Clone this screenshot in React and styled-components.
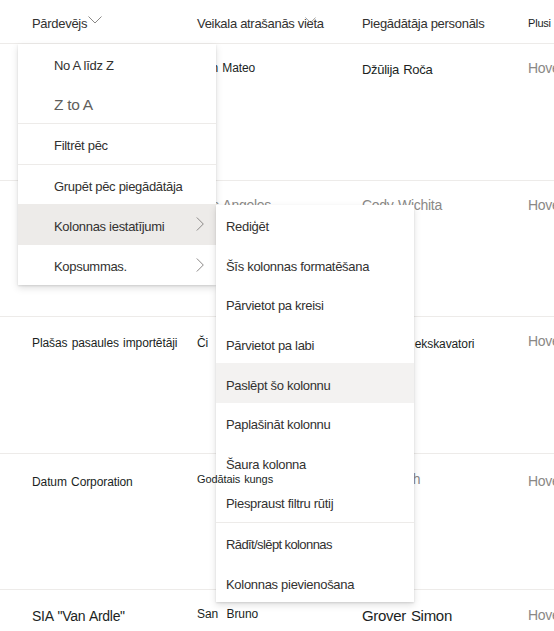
import React from 'react'
import styled, { createGlobalStyle } from 'styled-components'

const GlobalStyle = createGlobalStyle`
html, body {
    margin: 0;
    padding: 0;
    background: #ffffff;
    overflow: hidden;
}
body {
    font-family: "Liberation Sans", Arial, sans-serif;
    color: #323130;
}
`

const columns = [
    { title: 'Pārdevējs', chevron: true },
    { title: 'Veikala atrašanās vieta', stray: true },
    { title: 'Piegādātāja personāls' },
    { title: 'Plusi', small: true },
]

const rows = [
    [
        { text: 'Contoso Ltd' },
        { text: 'San Mateo', size: 12 },
        { text: 'Džūlija Roča', size: 13, top: 2 },
        { text: 'Hovercraft', muted: true },
    ],
    [
        { text: 'Fabrikam, Inc.' },
        { text: 'Los Angeles', muted: true },
        { text: 'Cody Wichita', muted: true },
        { text: 'Hovercraft', muted: true },
    ],
    [
        { text: 'Plašas pasaules importētāji', size: 12, top: 2 },
        { text: 'Či', size: 12, top: 2 },
        { text: 'Būvnieku ekskavatori', size: 12, top: 3 },
        { text: 'Hovercraft', muted: true },
    ],
    [
        { text: 'Datum Corporation', size: 12, top: 4 },
        { text: 'Godātais kungs', size: 11, top: 1, front: true },
        { text: 'Jans Fish', muted: true, top: 1 },
        { text: 'Hovercraft', muted: true, top: 3 },
    ],
    [
        { text: 'SIA "Van Ardle"', size: 14, top: 2 },
        { text: 'San\u00a0 Bruno', size: 12, top: 0 },
        { text: 'Grover Simon', size: 15, top: 2 },
        { text: 'Hovercraft', muted: true, top: 1 },
    ],
]

const mainMenu = [
    { label: 'No A līdz Z', h: 39.5 },
    { label: 'Z to A', h: 39.5, faded: true },
    { divider: true },
    { label: 'Filtrēt pēc', h: 39.5 },
    { divider: true },
    { label: 'Grupēt pēc piegādātāja', h: 39.5 },
    { label: 'Kolonnas iestatījumi', h: 40.5, active: true, sub: true },
    { label: 'Kopsummas.', h: 40.5, sub: true },
]

const subMenu = [
    { label: 'Rediģēt' },
    { label: 'Šīs kolonnas formatēšana' },
    { label: 'Pārvietot pa kreisi' },
    { label: 'Pārvietot pa labi' },
    { label: 'Paslēpt šo kolonnu', hover: true },
    { label: 'Paplašināt kolonnu' },
    { label: 'Šaura kolonna' },
    { label: 'Piespraust filtru rūtij' },
    { divider: true },
    { label: 'Rādīt/slēpt kolonnas', tight: true },
    { label: 'Kolonnas pievienošana' },
]

function ChevronDown({ size = 14 }) {
    return (
        <svg width={size} height={size / 2 + 1} viewBox="0 0 14 8" fill="none">
            <path d="M0.5 0.5L7 7L13.5 0.5" stroke="#8a8886" strokeWidth="1" />
        </svg>
    )
}

function ChevronRight() {
    return (
        <svg width="8" height="14" viewBox="0 0 8 14" fill="none">
            <path d="M0.8 0.5L7.3 7L0.8 13.5" stroke="#8a8886" strokeWidth="1" />
        </svg>
    )
}

function App() {
    return (
        <StyledPage>
            <GlobalStyle />
            <StyledHeader>
                {columns.map(col => (
                    <StyledHeaderCell key={col.title} $small={col.small}>
                        {col.title}
                        {col.chevron && (
                            <StyledHeaderChevron>
                                <ChevronDown />
                            </StyledHeaderChevron>
                        )}
                        {col.stray && (
                            <StyledStrayChevron>
                                <ChevronDown size={11} />
                            </StyledStrayChevron>
                        )}
                    </StyledHeaderCell>
                ))}
            </StyledHeader>

            {rows.map((row, i) => (
                <StyledRow key={i}>
                    {row.map((cell, j) => (
                        <StyledCell
                            key={j}
                            $size={cell.size}
                            $muted={cell.muted}
                            $top={cell.top}
                            $front={cell.front}
                        >
                            {cell.text}
                        </StyledCell>
                    ))}
                </StyledRow>
            ))}

            <StyledMenu $left={18} $top={44}>
                {mainMenu.map((item, i) =>
                    item.divider ? (
                        <StyledDivider key={i} />
                    ) : (
                        <StyledMenuItem
                            key={i}
                            $h={item.h}
                            $indent={36}
                            $bg={item.active ? '#edebe9' : null}
                            $faded={item.faded}
                        >
                            <span>{item.label}</span>
                            {item.sub && (
                                <StyledSubArrow>
                                    <ChevronRight />
                                </StyledSubArrow>
                            )}
                        </StyledMenuItem>
                    )
                )}
            </StyledMenu>

            <StyledMenu $left={216} $top={205}>
                {subMenu.map((item, i) =>
                    item.divider ? (
                        <StyledDivider key={i} />
                    ) : (
                        <StyledMenuItem
                            key={i}
                            $h={39.6}
                            $indent={10}
                            $bg={item.hover ? '#f3f2f1' : null}
                            $tight={item.tight}
                        >
                            <span>{item.label}</span>
                        </StyledMenuItem>
                    )
                )}
            </StyledMenu>
        </StyledPage>
    )
}

const StyledPage = styled.div`
position: relative;
width: 554px;
height: 631px;
overflow: hidden;
background: #ffffff;
`

const StyledHeader = styled.div`
display: grid;
grid-template-columns: 165px 165px 166px 1fr;
padding-left: 32px;
padding-top: 3px;
height: 44px;
box-sizing: border-box;
border-bottom: 1px solid #edebe9;
align-items: center;
`

const StyledHeaderCell = styled.div`
position: relative;
display: flex;
align-items: center;
white-space: nowrap;
font-size: ${p => (p.$small ? '11px' : '13px')};
letter-spacing: ${p => (p.$small ? '-0.2px' : '-0.3px')};
color: ${p => (p.$small ? '#201f1e' : '#323130')};
`

const StyledHeaderChevron = styled.span`
display: flex;
margin-left: 1px;
margin-bottom: 6px;
`

const StyledStrayChevron = styled.span`
position: absolute;
left: 108px;
top: 1px;
display: flex;
`

const StyledRow = styled.div`
display: grid;
grid-template-columns: 165px 165px 166px 1fr;
padding-left: 32px;
padding-top: 15px;
height: 136.5px;
box-sizing: border-box;
border-bottom: 1px solid #edebe9;
align-items: start;
`

const StyledCell = styled.div`
position: relative;
z-index: ${p => (p.$front ? 2 : 0)};
justify-self: start;
white-space: nowrap;
line-height: 18px;
font-size: ${p => (p.$size || 14)}px;
letter-spacing: ${p => (p.$size && p.$size <= 12 ? '-0.1px' : '-0.3px')};
word-spacing: 1px;
color: ${p => (p.$muted ? '#8a8886' : '#201f1e')};
margin-top: ${p => p.$top || 0}px;
`

const StyledMenu = styled.div`
position: absolute;
z-index: 1;
left: ${p => p.$left}px;
top: ${p => p.$top}px;
width: 198px;
background: #ffffff;
box-shadow: 0 3.2px 7.2px rgba(0, 0, 0, 0.13), 0 0.6px 1.8px rgba(0, 0, 0, 0.11);
`

const StyledMenuItem = styled.div`
display: flex;
align-items: center;
height: ${p => p.$h}px;
box-sizing: border-box;
padding-top: 4px;
padding-left: ${p => p.$indent}px;
padding-right: 12px;
background: ${p => p.$bg || 'transparent'};
white-space: nowrap;
font-size: ${p => (p.$faded ? '15.5px' : '13px')};
letter-spacing: ${p => (p.$tight ? '-0.6px' : '-0.3px')};
color: ${p => (p.$faded ? '#605e5c' : '#323130')};
`

const StyledSubArrow = styled.span`
display: flex;
margin-left: auto;
margin-bottom: 4px;
`

const StyledDivider = styled.div`
height: 1px;
background: #edebe9;
`

export default App
